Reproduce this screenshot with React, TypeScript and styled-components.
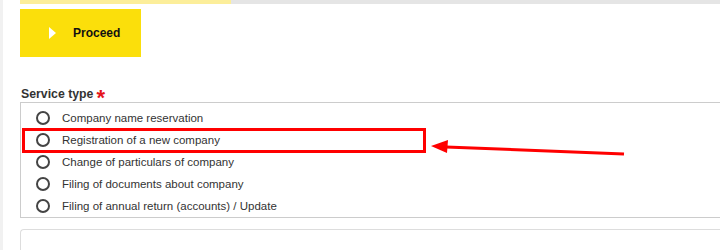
import React from "react";
import styled, { createGlobalStyle } from "styled-components";

const Global = createGlobalStyle`
  html, body { margin: 0; padding: 0; background: #fff; overflow: hidden; }
  body { font-family: "Liberation Sans", Arial, sans-serif; color: #333; }
`;

const Page = styled.div`
  display: flex;
  height: 250px;
  overflow: hidden;
`;

const SideStrip = styled.div`
  width: 3px;
  flex: none;
  background: #f1f1f1;
`;

const Content = styled.div`
  flex: 1;
  padding-left: 17px;
  display: flex;
  flex-direction: column;
  & > * { flex-shrink: 0; }
`;

const Progress = styled.div`
  height: 4px;
  background: #e5e5e5;
  display: flex;
`;

const ProgressFill = styled.div`
  height: 100%;
  background: #fcee9a;
`;

const ProceedButton = styled.button`
  margin-top: 5px;
  width: 121px;
  height: 48px;
  border: none;
  background: #fbdf0b;
  display: flex;
  align-items: center;
  padding: 0 0 0 29px;
  gap: 17px;
  font-family: "Liberation Sans", Arial, sans-serif;
  font-weight: bold;
  font-size: 12px;
  color: #111;
  cursor: pointer;
`;

const Triangle = styled.span`
  width: 0;
  height: 0;
  border-top: 6px solid transparent;
  border-bottom: 6px solid transparent;
  border-left: 7px solid #fff;
`;

const Label = styled.div`
  margin-top: 29px;
  font-size: 12.3px;
  font-weight: bold;
  color: #333;
  display: flex;
  align-items: center;
  gap: 3px;
  padding-left: 1px;
  height: 16px;
`;

const Required = styled.span`
  color: #e5141b;
  font-size: 22px;
  line-height: 16px;
  height: 16px;
  margin-top: 7px;
`;

const RadioBox = styled.div`
  position: relative;
  border: 1px solid #ccc;
  border-right: none;
  padding: 4px 0 0 0;
  height: 116px;
  box-sizing: border-box;
`;

const Row = styled.label`
  display: flex;
  align-items: center;
  height: 22px;
  padding-left: 15px;
  gap: 12px;
  font-size: 11.5px;
  color: #333;
`;

const Circle = styled.span`
  width: 10px;
  height: 10px;
  border: 2px solid #444;
  border-radius: 50%;
  flex: none;
`;

const Highlight = styled.div`
  position: absolute;
  left: 1px;
  top: 25px;
  width: 404px;
  height: 25px;
  border: 3px solid #ff0000;
  box-sizing: border-box;
`;

const ArrowSvg = styled.svg`
  position: absolute;
  left: 405px;
  top: 20px;
  overflow: visible;
`;

const LowerCard = styled.div`
  margin-top: 11px;
  height: 60px;
  border: 1px solid #ddd;
  border-right: none;
  border-radius: 4px 0 0 0;
`;

const options = [
  "Company name reservation",
  "Registration of a new company",
  "Change of particulars of company",
  "Filing of documents about company",
  "Filing of annual return (accounts) / Update",
];

export default function App() {
  return (
    <>
      <Global />
      <Page>
        <SideStrip />
        <Content>
          <Progress>
            <ProgressFill style={{ width: "211px" }} />
          </Progress>
          <ProceedButton>
            <Triangle />
            Proceed
          </ProceedButton>
          <Label>
            Service type<Required>*</Required>
          </Label>
          <RadioBox>
            {options.map((o) => (
              <Row key={o}>
                <Circle />
                {o}
              </Row>
            ))}
            <Highlight />
            <ArrowSvg width="200" height="20">
              <line x1="198" y1="31" x2="20" y2="24" stroke="#ff0000" strokeWidth="3" />
              <polygon points="5,23 22,17 21,30" fill="#ff0000" />
            </ArrowSvg>
          </RadioBox>
          <LowerCard />
        </Content>
      </Page>
    </>
  );
}
